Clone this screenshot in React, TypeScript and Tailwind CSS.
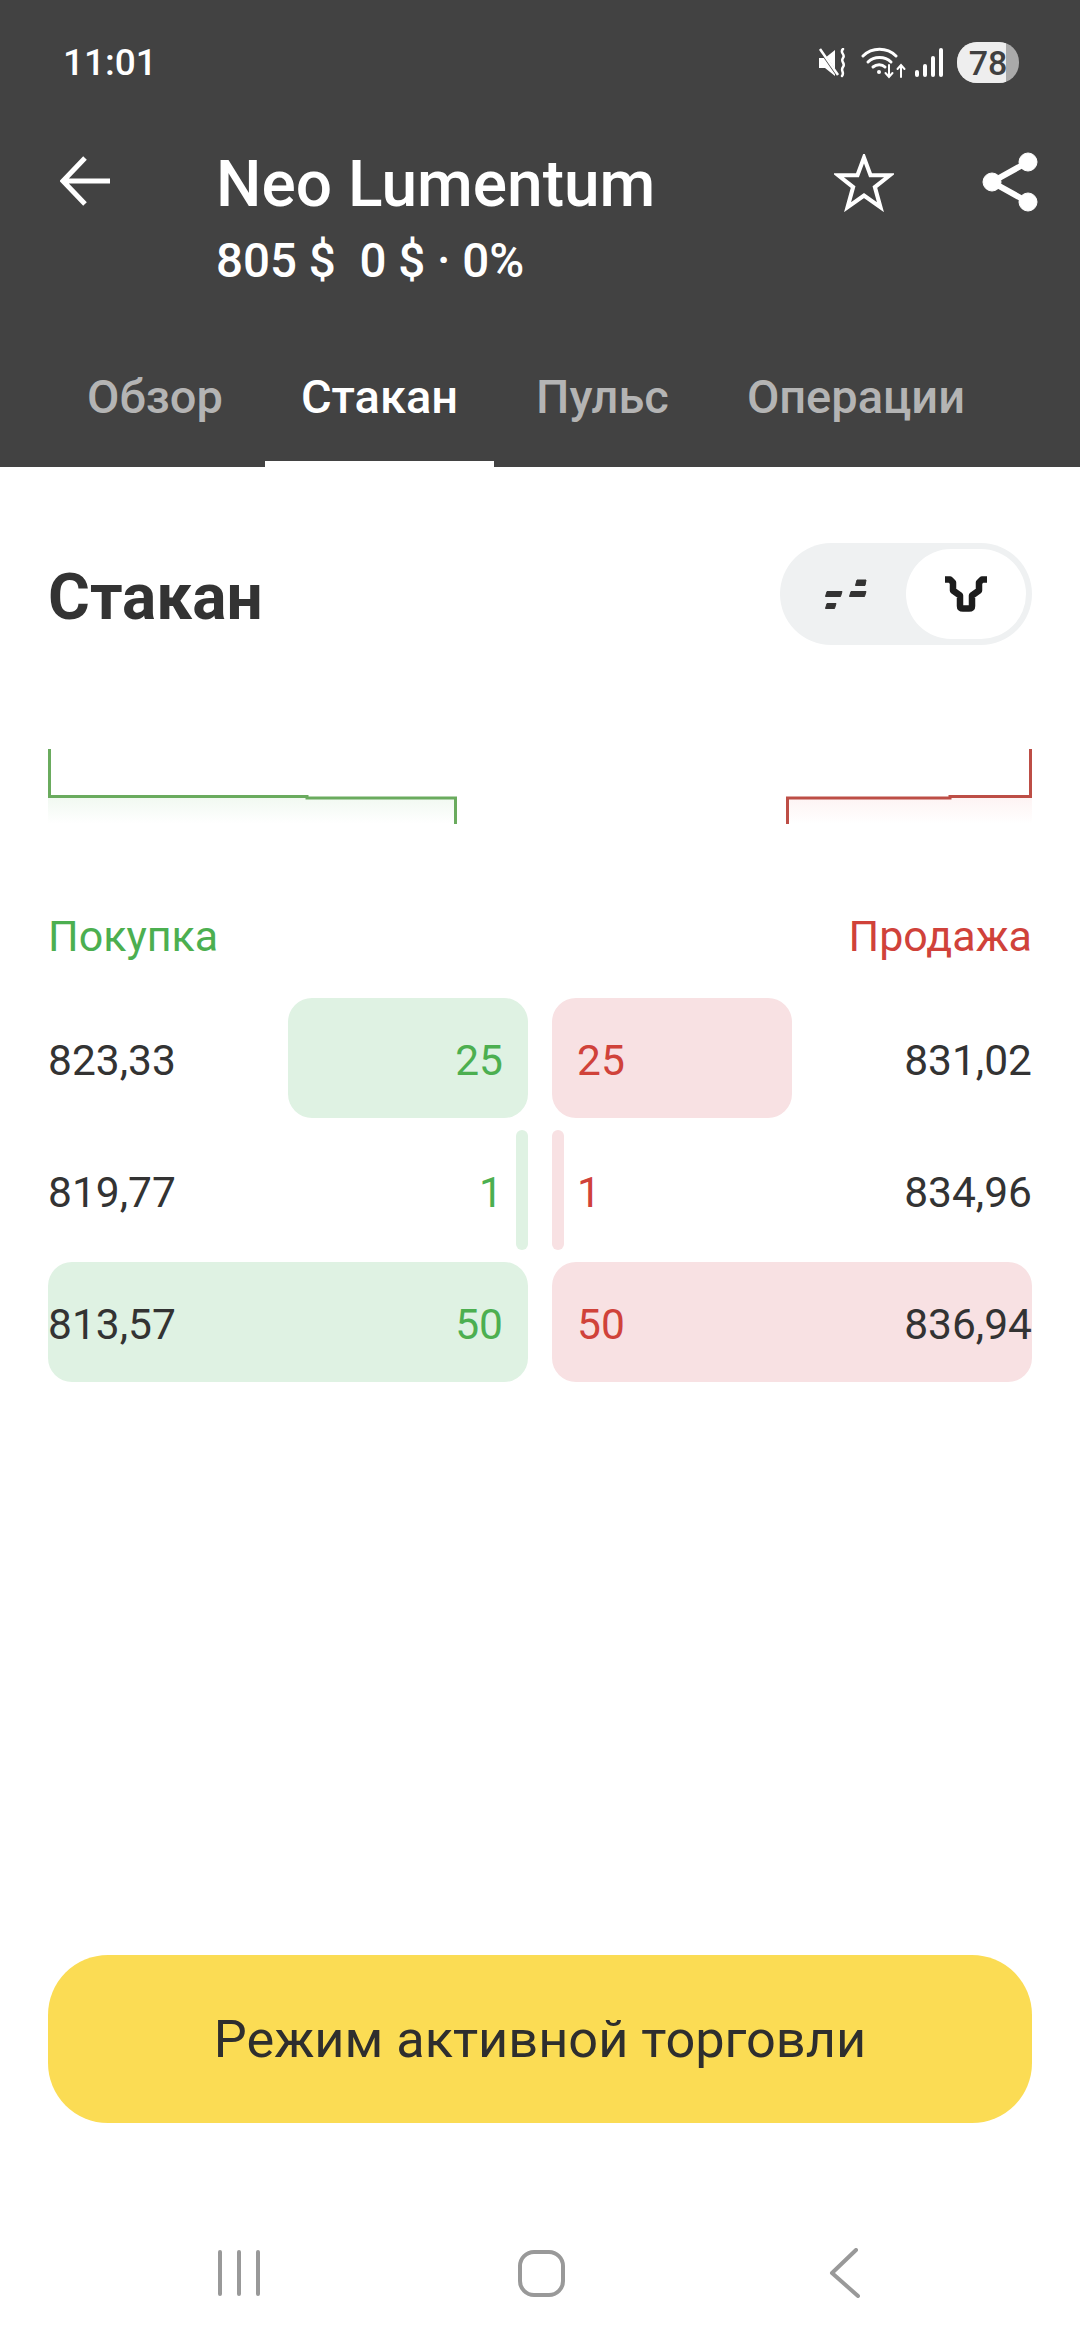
const rows = [
  { bid: '823,33', ask: '831,02', qty: 25 },
  { bid: '819,77', ask: '834,96', qty: 1 },
  { bid: '813,57', ask: '836,94', qty: 50 },
];

function StatusIcons() {
  return (
    <div className="flex items-center">
      {/* mute + vibrate */}
      <svg width="30" height="30" viewBox="0 0 30 30" className="mr-[13px]" fill="none">
        <path d="M1 10h6L17 2v26L7 20H1z" fill="#fff" />
        <path d="M2 2l18 26" stroke="#424242" strokeWidth="3" />
        <path d="M2 1l18 26" stroke="#fff" strokeWidth="2.5" />
        <path d="M25 1c-4 4 3 5 0 9s3 5 0 9 2 5-1 9" stroke="#fff" strokeWidth="2.5" strokeLinecap="round" />
      </svg>
      {/* wifi with arrows */}
      <svg width="46" height="32" viewBox="0 0 46 32" className="mr-[8px]" fill="none" stroke="#fff" strokeLinecap="round">
        <path d="M2 9C11 0 26 0 35 9" strokeWidth="3" />
        <path d="M7 15c6-6 17-6 23 0" strokeWidth="3" />
        <path d="M12 20c3.500-3 9-3 12 0" strokeWidth="3" />
        <circle cx="18" cy="25" r="2" fill="#fff" stroke="none" />
        <path d="M28 18v11M24.500 26l3.500 4 3.500-4" strokeWidth="2" />
        <path d="M40 30V19M36.500 22l3.500-4 3.500 4" strokeWidth="2" />
      </svg>
      {/* signal */}
      <svg width="28" height="30" viewBox="0 0 28 30" className="mr-[14px]" fill="#fff">
        <rect x="0" y="22" width="4" height="7" rx="2" />
        <rect x="8" y="16" width="4" height="13" rx="2" />
        <rect x="16" y="8" width="4" height="21" rx="2" />
        <rect x="24" y="0" width="4" height="29" rx="2" />
      </svg>
      {/* battery */}
      <div className="relative w-[62px] h-[41px] rounded-[20px] bg-[#aaaaaa] overflow-hidden">
        <div className="w-[49px] h-full bg-[#eeeeee]" />
        <span className="absolute inset-0 flex items-center justify-center text-[34px] leading-none font-medium text-[#404040]">78</span>
      </div>
    </div>
  );
}

function Header() {
  return (
    <header className="bg-[#424242] h-[467px] flex flex-col text-white">
      <div className="flex items-center justify-between h-[41px] mt-[42px] pl-[63px] pr-[61px]">
        <span className="text-[37px] leading-none font-medium">11:01</span>
        <StatusIcons />
      </div>
      <div className="flex items-start mt-[67px] pl-[60px] pr-[42px]">
        <svg width="50" height="50" viewBox="0 0 50 50" fill="none" stroke="#fff" strokeWidth="5" className="mt-[6px] shrink-0">
          <path d="M50 25H4M25 2L3 25l22 23" />
        </svg>
        <div className="ml-[106px] flex-1">
          <div className="text-[64px] leading-[70px] font-medium">Neo Lumentum</div>
          <div className="text-[47.500px] leading-[52px] mt-[15px] font-medium whitespace-pre">805 $  0 $ · 0%</div>
        </div>
        <svg width="60" height="58" viewBox="0 0 24 24" fill="none" stroke="#fff" strokeWidth="1.700" className="shrink-0 mt-[4px]">
          <path d="M12 1.500l2.700 7.300h8l-6.200 4.900 2.300 8.300L12 17.200 5.200 22l2.300-8.300L1.300 8.800h8z" />
        </svg>
        <svg width="56" height="60" viewBox="0 0 56 60" fill="#fff" stroke="#fff" className="shrink-0 ml-[88px] mt-[2px]">
          <path d="M46 10L10 30l36 20" fill="none" strokeWidth="6" />
          <circle cx="46" cy="10" r="9" />
          <circle cx="10" cy="30" r="9" />
          <circle cx="46" cy="50" r="9" />
        </svg>
      </div>
      <nav className="flex mt-auto pl-[51px] gap-[6px] text-[47px] font-medium">
        {['Обзор', 'Стакан', 'Пульс', 'Операции'].map((tab) => (
          <div
            key={tab}
            className={
              tab === 'Стакан'
                ? 'px-[36px] pb-[38px] leading-[52px] border-b-[6px] border-white text-white'
                : 'px-[36px] pb-[38px] leading-[52px] border-b-[6px] border-transparent text-[#b4b4b4]'
            }
          >
            {tab}
          </div>
        ))}
      </nav>
    </header>
  );
}

function ViewToggle() {
  return (
    <div className="w-[252px] h-[102px] rounded-full bg-[#eff1f2] flex items-center justify-end pr-[6px] relative">
      <svg width="44" height="32" viewBox="0 0 44 32" fill="#333" stroke="#333" strokeWidth="1" strokeLinejoin="round" className="absolute left-[44px] top-[36px]">
        <path d="M3 12.500h15l-1.500 5H1.500zM3 24.500h9l-1.500 5H1.500zM27 12.500h15l-1.500 5h-15zM33 1h9l-1 5.500H31.500z" />
      </svg>
      <div className="w-[120px] h-[90px] rounded-full bg-white flex items-center justify-center">
        <svg width="42" height="36" viewBox="0 0 42 36" fill="none" stroke="#1c1c1c" strokeWidth="6.500" strokeLinejoin="round">
          <path d="M0 3.500h5l3 3v8l7 5v10.500c0 2 1 2.500 3 2.500h6c2 0 3-.5 3-2.500V19.500l7-5v-8l3-3h5" />
        </svg>
      </div>
    </div>
  );
}

function DepthChart() {
  return (
    <div className="flex justify-between mt-[104px] h-[76px]">
      <svg width="409" height="76" viewBox="0 0 409 76" fill="none">
        <defs>
          <linearGradient id="buyFill" x1="0" y1="0" x2="0" y2="1">
            <stop offset="0" stopColor="#4caf50" stopOpacity="0.08" />
            <stop offset="1" stopColor="#4caf50" stopOpacity="0" />
          </linearGradient>
        </defs>
        <rect x="0" y="48" width="409" height="27" fill="url(#buyFill)" />
        <path d="M1.500 0V47.500H259V49H407.500V75" stroke="#6aab5e" strokeWidth="3" />
      </svg>
      <svg width="246" height="76" viewBox="0 0 246 76" fill="none">
        <defs>
          <linearGradient id="sellFill" x1="0" y1="0" x2="0" y2="1">
            <stop offset="0" stopColor="#e53935" stopOpacity="0.06" />
            <stop offset="1" stopColor="#e53935" stopOpacity="0" />
          </linearGradient>
        </defs>
        <rect x="0" y="48" width="246" height="27" fill="url(#sellFill)" />
        <path d="M1.500 75V49H164V47.500H244.500V0" stroke="#bd4e46" strokeWidth="3" />
      </svg>
    </div>
  );
}

function OrderBook() {
  return (
    <div className="mt-[86px]">
      <div className="flex justify-between text-[43px] leading-[50px]">
        <span className="text-[#4caf50]">Покупка</span>
        <span className="text-[#d0423a]">Продажа</span>
      </div>
      <div className="flex flex-col gap-[12px] mt-[37px] text-[42.500px]">
        {rows.map((r) => (
          <div key={r.bid} className="flex gap-[24px] h-[120px]">
            <div className="flex-1 relative flex items-center justify-between pr-[25px] pt-[5px]">
              <div
                className="absolute right-0 top-0 h-full rounded-[24px] bg-[#dff2e3]"
                style={{ width: `${r.qty * 2}%`, minWidth: 12 }}
              />
              <span className="relative text-[#333333]">{r.bid}</span>
              <span className="relative text-[#4caf50]">{r.qty}</span>
            </div>
            <div className="flex-1 relative flex items-center justify-between pl-[25px] pt-[5px]">
              <div
                className="absolute left-0 top-0 h-full rounded-[24px] bg-[#f8e1e3]"
                style={{ width: `${r.qty * 2}%`, minWidth: 12 }}
              />
              <span className="relative text-[#d0423a]">{r.qty}</span>
              <span className="relative text-[#333333]">{r.ask}</span>
            </div>
          </div>
        ))}
      </div>
    </div>
  );
}

function NavBar() {
  return (
    <div className="flex items-center h-[50px] pl-[218px] mb-[42px]">
      <svg width="42" height="46" viewBox="0 0 42 46" fill="none" stroke="#999" strokeWidth="4" strokeLinecap="round">
        <path d="M2 2v42M21 2v42M40 2v42" />
      </svg>
      <div className="w-[47px] h-[47px] rounded-[16px] border-[4px] border-[#999] ml-[258px]" />
      <svg width="32" height="50" viewBox="0 0 32 50" fill="none" stroke="#999" strokeWidth="4" strokeLinecap="round" strokeLinejoin="round" className="ml-[264px]">
        <path d="M27 2L3 25l26 23" />
      </svg>
    </div>
  );
}

export default function App() {
  return (
    <div className="w-[1080px] h-[2340px] bg-white flex flex-col font-['Roboto',sans-serif] overflow-hidden">
      <Header />
      <main className="flex-1 px-[48px] flex flex-col">
        <div className="flex items-center justify-between mt-[76px]">
          <h1 className="text-[64px] leading-none font-bold text-[#333333] mt-[8px]">Стакан</h1>
          <ViewToggle />
        </div>
        <DepthChart />
        <OrderBook />
        <button className="mt-auto mb-[125px] h-[168px] rounded-[60px] bg-[#fbdc54] text-[52.300px] text-[#2e2e2e]">
          Режим активной торговли
        </button>
      </main>
      <NavBar />
    </div>
  );
}
